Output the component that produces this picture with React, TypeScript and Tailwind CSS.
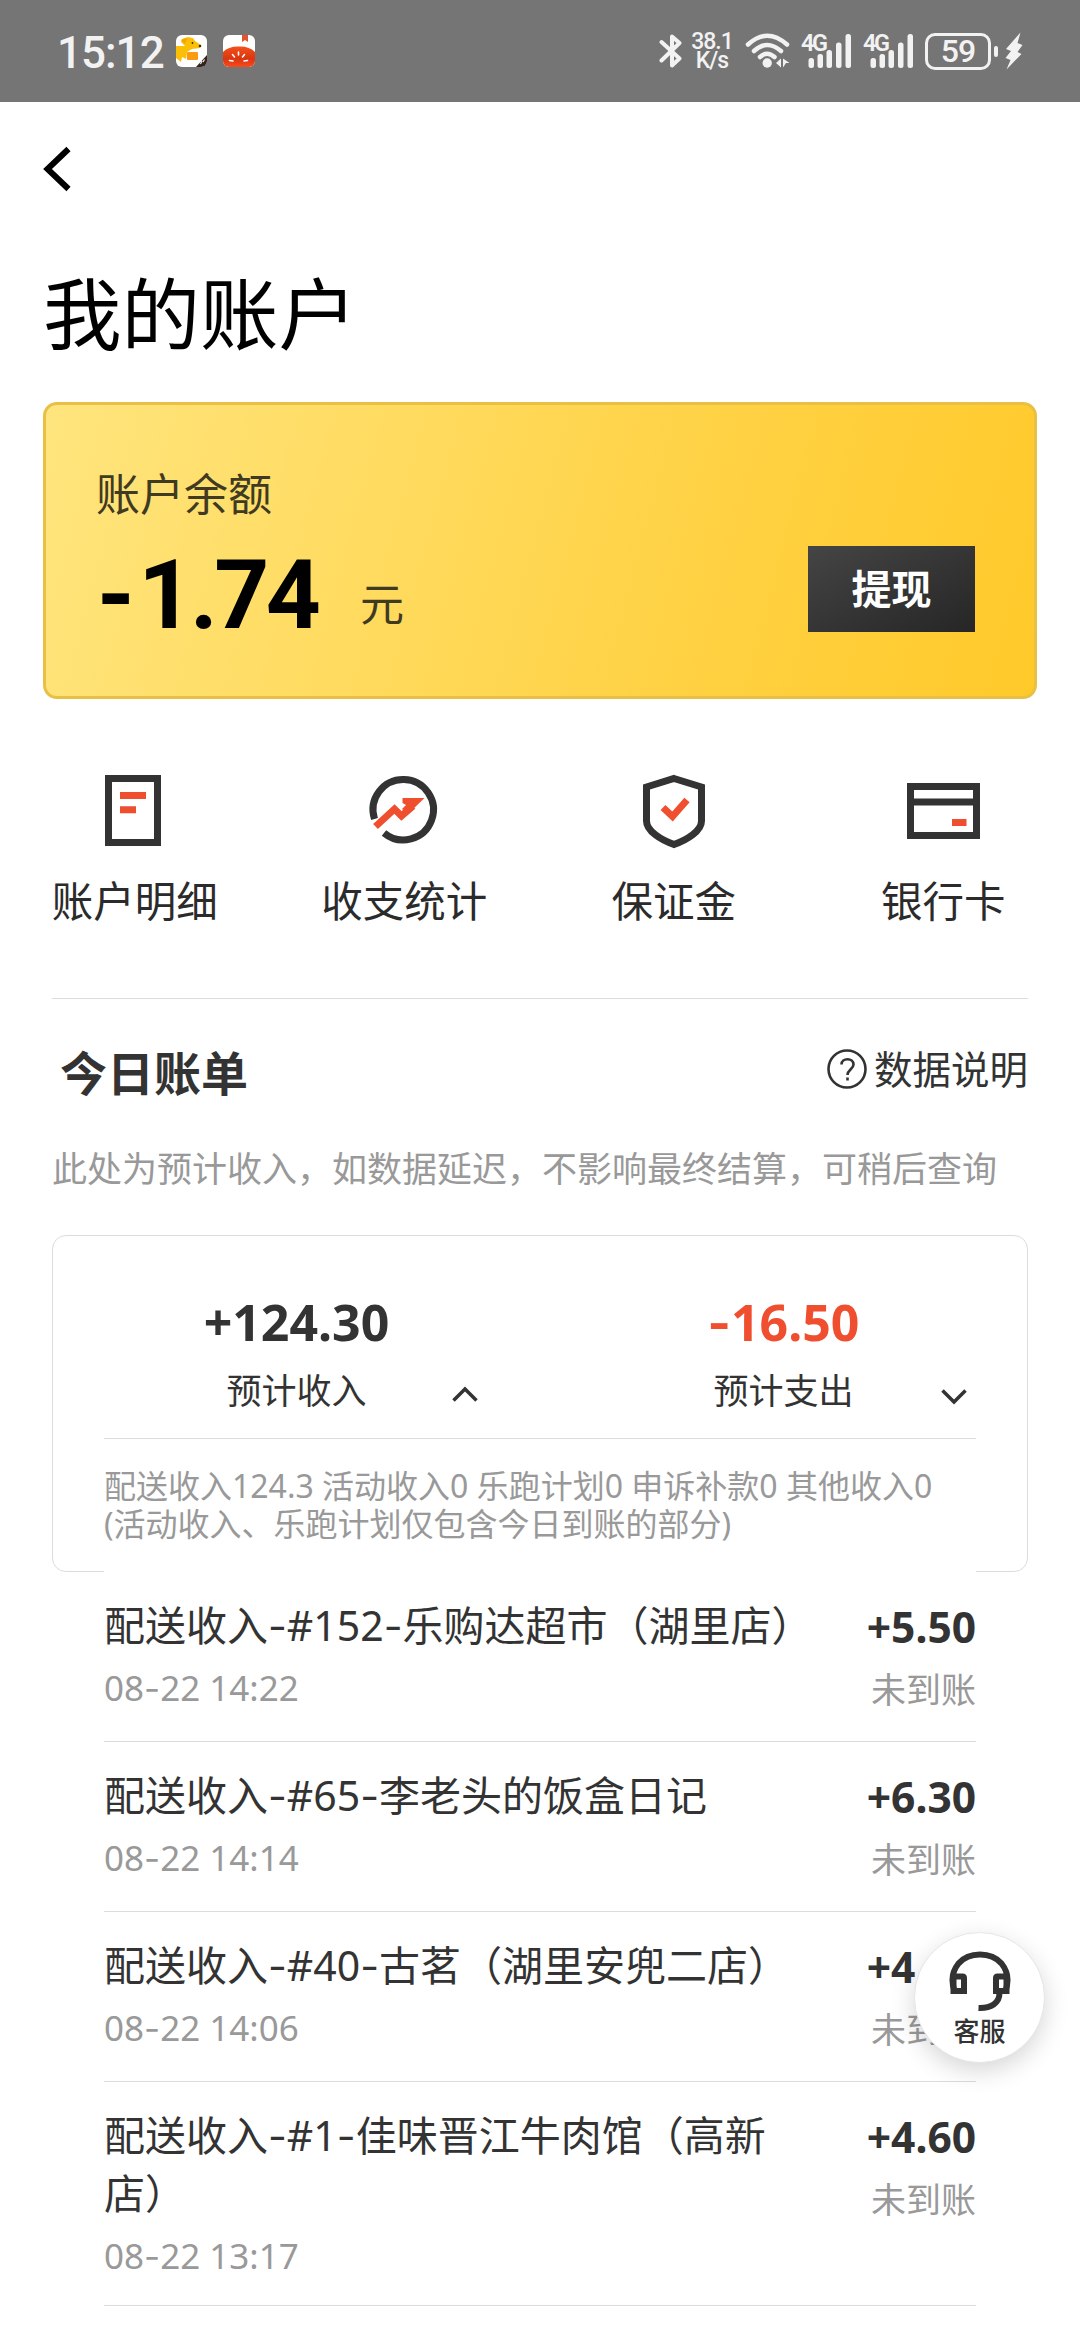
import { Fragment, type ReactNode } from 'react'

type Bill = {
    id: number
    title: string
    time: string
    amount: string
}

const bills: Bill[] = [
    { id: 152, title: '配送收入-#152-乐购达超市（湖里店）', time: '08-22 14:22', amount: '+5.50' },
    { id: 65, title: '配送收入-#65-李老头的饭盒日记', time: '08-22 14:14', amount: '+6.30' },
    { id: 40, title: '配送收入-#40-古茗（湖里安兜二店）', time: '08-22 14:06', amount: '+4.60' },
    { id: 1, title: '配送收入-#1-佳味晋江牛肉馆（高新店）', time: '08-22 13:17', amount: '+4.60' },
]

// Inter has a wider hyphen than Noto Sans
function Dashed({ text }: { text: string }) {
    return (
        <>
            {text.split('-').map((part, i) => (
                <Fragment key={i}>
                    {i > 0 && <span className="leading-none [font-family:Inter,sans-serif]">-</span>}
                    {part}
                </Fragment>
            ))}
        </>
    )
}

function KangarooAppIcon() {
    return (
        <svg className="w-8 h-8" viewBox="0 0 32 32">
            <defs>
                <clipPath id="kangaroo">
                    <rect width="31" height="32" rx="6" />
                </clipPath>
            </defs>
            <g clipPath="url(#kangaroo)">
                <rect width="32" height="32" fill="#fff" />
                <path d="M0 11 L9 11 L5 7 L6 4 L12 2 L17 3 L19 6 L25 10 L24 13 L16 14 L11 17 L10 24 L6 22 L5 27 L0 23 Z" fill="#fcbf08" />
                <path d="M5 5 L11 3 L9 9 Z" fill="#f5a300" />
                <rect x="11" y="17" width="11" height="8" rx="1" fill="#fb9a10" />
                <circle cx="16.5" cy="8" r="0.9" fill="#3a2a10" />
                <circle cx="24" cy="11" r="1.3" fill="#3a2a10" />
                <path d="M20 32 L31 20 V32 Z" fill="#35241b" />
                <path d="M24.5 29 L26 26 M27 27 L28.5 24.5" stroke="#fff" strokeWidth="1.1" />
            </g>
        </svg>
    )
}

function TomatoAppIcon() {
    return (
        <svg className="w-8 h-8" viewBox="0 0 32 32">
            <defs>
                <clipPath id="tomato">
                    <rect width="32" height="32" rx="6" />
                </clipPath>
                <linearGradient id="tomatoBody" x1="0" y1="0" x2="0" y2="1">
                    <stop offset="0" stopColor="#f4511e" />
                    <stop offset="0.6" stopColor="#d93610" />
                    <stop offset="1" stopColor="#fb4a1a" />
                </linearGradient>
            </defs>
            <g clipPath="url(#tomato)">
                <rect width="32" height="32" fill="#fff" />
                <path d="M19 0 H25 V7 L22 5 L19 7 Z" fill="#e0552f" />
                <path d="M0 17 Q6 11 16 11.5 Q26 11 32 17 V32 H0 Z" fill="url(#tomatoBody)" />
                <path d="M15.5 17 V20 M9.5 19.5 L11.5 22 M21.5 19.5 L19.5 22 M6.5 25.5 L10 26 M24.5 25.5 L21 26" stroke="#fff" strokeWidth="1.6" strokeLinecap="round" />
            </g>
        </svg>
    )
}

function Signal() {
    return (
        <div className="flex w-[52px] h-[35px] relative">
            <span className="absolute left-0 top-0 text-[23.5px] leading-[18px] font-semibold tracking-[-2.5px] [font-family:Roboto,sans-serif]">4G</span>
            <svg className="w-[52px] h-[35px]" viewBox="0 0 52 35" fill="#f2f2f2">
                <rect x="7.5" y="24" width="5.5" height="10" rx="2.5" />
                <rect x="16.5" y="20" width="5.5" height="14" rx="2.5" />
                <rect x="25.5" y="16" width="5.5" height="18" rx="2.5" />
                <rect x="35" y="8.5" width="5.5" height="25.5" rx="2.5" />
                <rect x="44.5" y="0" width="5.5" height="34" rx="2.5" />
            </svg>
        </div>
    )
}

function StatusBar() {
    return (
        <div className="flex items-center justify-between h-[102px] pl-[57px] pr-[57px] bg-[#757575] text-[#f2f2f2]">
            <div className="flex items-center">
                <span className="w-[119px] pt-[3px] text-[44px] leading-[50px] font-medium tracking-[-1px] [font-family:Roboto,sans-serif]">15:12</span>
                <KangarooAppIcon />
                <div className="w-[15px]" />
                <TomatoAppIcon />
            </div>
            <div className="flex items-center">
                <svg className="w-[24px] h-[36px]" viewBox="0 0 24 36" fill="none" stroke="#f2f2f2" strokeWidth="4" strokeLinejoin="round" strokeLinecap="round">
                    <path d="M2.5 9 L20.5 25.5 L13 32.5 V3.5 L20.5 10 L2.5 27.5" />
                </svg>
                <div className="flex flex-col items-center w-[42px] pt-px ml-[8px] text-[23px] leading-[18.5px] tracking-[-1px] font-medium [font-family:Roboto,sans-serif]">
                    <span>38.1</span>
                    <span>K/s</span>
                </div>
                <svg className="w-[46px] h-[36px] ml-[12px]" viewBox="0 0 46 36" fill="none" stroke="#f2f2f2" strokeWidth="4.5" strokeLinecap="round">
                    <path d="M3 11.5 Q22 -6 42 11.5" />
                    <path d="M9 18 Q22 6 36 18" />
                    <path d="M15 24 Q22 17.5 29.5 24" />
                    <circle cx="22.2" cy="30" r="4.7" fill="#f2f2f2" stroke="none" />
                    <path d="M31 30 L36 25.5 V34.5 Z M38 25.5 L44.5 30 H41 L38 34.5 Z" fill="#f2f2f2" stroke="none" />
                </svg>
                <div className="flex gap-[10px] ml-[10px]">
                    <Signal />
                    <Signal />
                </div>
                <div className="flex items-center justify-center w-[66px] h-[37px] ml-[10px] rounded-[10px] border-[3px] border-[#f2f2f2] text-[32px] leading-[32px] font-medium tracking-[-1px] [font-family:Roboto,sans-serif]">
                    59
                </div>
                <div className="w-[4px] h-[11px] ml-[3px] rounded-[2px] bg-[#f2f2f2]" />
                <svg className="w-[18px] h-[38px] ml-[7px]" viewBox="0 0 18 38" fill="#f2f2f2">
                    <path d="M15.5 0.5 L1 17 L6 19 L0.5 26 L5.5 28 L1.5 37.5 L16.5 22 L12.5 20 L17.5 13 L12.5 11 Z" />
                </svg>
            </div>
        </div>
    )
}

function BalanceCard() {
    return (
        <div className="flex justify-between h-[297px] mx-[43px] rounded-[14px] border-[3px] border-[#e9c045] bg-[linear-gradient(105deg,#ffe57e_0%,#ffd348_60%,#ffc929_100%)] bg-origin-border">
            <div className="pt-[59px] pl-[50px]">
                <p className="text-[44px] leading-[60px] text-[#3f3a22]">账户余额</p>
                <div className="flex items-end mt-[21px]">
                    <span className="w-[264px] pl-px text-[96px] leading-[100px] font-bold text-black tracking-[-3.5px] [font-family:Roboto,sans-serif]">
                        <span className="mr-[7px]">-</span>1.74
                    </span>
                    <span className="mb-[11px] text-[44px] leading-[60px] text-[#3f3a22]">元</span>
                </div>
            </div>
            <button className="w-[167px] h-[86px] mt-[141px] mr-[59px] bg-gradient-to-br from-[#454545] to-[#262626] text-white text-[40px] font-bold">
                提现
            </button>
        </div>
    )
}

function Shortcut({ label, children }: { label: string; children: ReactNode }) {
    return (
        <div className="flex flex-col items-center">
            <svg className="w-20 h-20" viewBox="0 0 80 80" fill="none" stroke="#333333" strokeWidth="7">
                {children}
            </svg>
            <span className="mt-[20px] text-[41.5px] leading-[60px] text-[#2b2b2b]">{label}</span>
        </div>
    )
}

function Shortcuts() {
    return (
        <div className="grid grid-cols-4 w-[1078px] mt-[72px]">
            <Shortcut label="账户明细">
                <rect x="13.5" y="7.5" width="49" height="64" />
                <path d="M25 24.5 H51 M25 38.7 H41" stroke="#f04f2f" />
            </Shortcut>
            <Shortcut label="收支统计">
                <path d="M10.5 48 A30.2 30.2 0 1 1 20 62" />
                <path d="M11.5 55.5 L30.5 38 L37.5 45 L49 35" stroke="#f04f2f" />
                <path d="M38.5 27 H60.5 L44 43 L38 38 L42 34 L38.5 32 Z" fill="#f04f2f" stroke="none" />
            </Shortcut>
            <Shortcut label="保证金">
                <path d="M40 7.5 L67.5 16 V50 C67.5 60 53 69 40 73.5 C27 69 12.5 60 12.5 50 V16 Z" />
                <path d="M29 36.5 L38.5 45.5 L53 29" stroke="#f04f2f" />
            </Shortcut>
            <Shortcut label="银行卡">
                <rect x="7.5" y="15.5" width="66" height="49" />
                <path d="M7 31 H74" />
                <path d="M49 51.5 H63.5" stroke="#f04f2f" />
            </Shortcut>
        </div>
    )
}

function SummaryColumn({ amount, label, open }: { amount: string; label: string; open?: boolean }) {
    return (
        <div>
            <p className={open ? 'text-center text-[50px] leading-[60px] font-bold text-[#333333]' : 'text-center text-[50px] leading-[60px] font-bold text-[#f04f2f]'}>
                <Dashed text={amount} />
            </p>
            <div className="grid grid-cols-[1fr_auto_1fr] items-center mt-[14px] text-[35px] leading-[50px] text-[#333333]">
                <span />
                <span>{label}</span>
                <svg className={open ? 'w-[26px] h-[16px] ml-[85px] mt-[6px]' : 'w-[26px] h-[16px] ml-[87px] mt-[12px]'} viewBox="0 0 26 16" fill="none" stroke="#333333" strokeWidth="3.5">
                    <path d={open ? 'M1.5 14.5 L13 3 L24.5 14.5' : 'M1.5 1.5 L13 13 L24.5 1.5'} />
                </svg>
            </div>
        </div>
    )
}

function BillRow({ bill }: { bill: Bill }) {
    return (
        <div className="flex justify-between pt-[24px] pb-[33px] last:pb-[29px] border-b border-[#dcdcdc]">
            <div className="w-[716px]">
                <p className="text-[41px] leading-[58px] text-[#333333]">
                    <Dashed text={bill.title} />
                </p>
                <p className="mt-[14px] text-[35px] leading-[40px] text-[#999999]">
                    <Dashed text={bill.time} />
                </p>
            </div>
            <div className="-mb-[2px] text-right whitespace-nowrap">
                <p className="mt-[2px] text-[42.5px] leading-[58px] font-bold text-[#333333]">{bill.amount}</p>
                <p className="mt-[14px] text-[35px] leading-[40px] text-[#999999]">未到账</p>
            </div>
        </div>
    )
}

function ServiceButton() {
    return (
        <button className="absolute left-[914px] top-[1932px] flex flex-col items-center w-[131px] h-[131px] pt-[18px] rounded-full border border-[#e6e6e6] bg-white shadow-[0_8px_24px_rgba(0,0,0,0.16)]">
            <svg className="w-[62px] h-[62px]" viewBox="0 0 62 62" fill="none" stroke="#333333" strokeWidth="6">
                <path d="M5.5 40 C2 30 3.5 20 9.5 12.5 C20 0.5 42 0.5 52.5 12.5 C58.5 20 60 30 56.5 40" />
                <path d="M4.5 40 V25.5 H13.5 Q15 25.5 15 27 V40 Z" />
                <path d="M57.5 40 V25.5 H48.5 Q47 25.5 47 27 V40 Z" />
                <path d="M50.5 42 C50.5 52 42 57.5 29.5 57" />
            </svg>
            <span className="mt-[3px] text-[26px] leading-[30px] font-medium text-[#333333]">客服</span>
        </button>
    )
}

export default function App() {
    return (
        <div className="relative w-[1080px] h-[2340px] overflow-hidden bg-white text-[#333333] [font-family:'Noto_Sans','Noto_Sans_CJK_SC',sans-serif]">
            <StatusBar />

            <div className="flex items-center h-[134px] pl-[42px]">
                <svg className="w-[30px] h-[48px]" viewBox="0 0 30 48" fill="none" stroke="#000000" strokeWidth="6">
                    <path d="M26.5 4 L5.5 24 L26.5 44" />
                </svg>
            </div>
            <h1 className="mt-[34px] mb-[44px] pl-[43px] text-[78.5px] leading-[88px] text-black">我的账户</h1>

            <BalanceCard />
            <Shortcuts />

            {/* 今日账单 */}
            <div className="mx-[52px] mt-[67px] border-t border-[#dcdcdc]">
                <div className="flex items-start justify-between pt-[44px]">
                    <h2 className="pl-[8px] text-[47px] leading-[60px] font-bold">今日账单</h2>
                    <div className="flex items-center -mt-[4px] text-[38.5px] leading-[60px]">
                        <svg className="w-[40px] h-[40px] mr-[7px]" viewBox="0 0 40 40" fill="none" stroke="#333333" strokeWidth="2.6">
                            <circle cx="20" cy="20" r="18.5" />
                            <path d="M14.5 15.5 C14.5 8.5 26.5 8.5 26.5 15.5 C26.5 20 20.5 20.5 20.5 26" />
                            <path d="M20.5 28.5 V31.5" />
                        </svg>
                        <span>数据说明</span>
                    </div>
                </div>
                <p className="mt-[41px] text-[35px] leading-[50px] text-[#999999] whitespace-nowrap">
                    此处为预计收入，如数据延迟，不影响最终结算，可稍后查询
                </p>
            </div>

            <div className="h-[337px] mx-[52px] mt-[41px] pt-[56px] rounded-[14px] border border-[#dcdcdc]">
                <div className="grid grid-cols-2">
                    <SummaryColumn amount="+124.30" label="预计收入" open />
                    <SummaryColumn amount="-16.50" label="预计支出" />
                </div>
                <div className="mx-[51px] mt-[22px] pt-[28px] border-t border-[#dcdcdc] text-[32px] leading-[38px] text-[#999999] whitespace-nowrap">
                    <p>配送收入124.3 活动收入0 乐跑计划0 申诉补款0 其他收入0</p>
                    <p>(活动收入、乐跑计划仅包含今日到账的部分)</p>
                </div>
            </div>

            <div className="relative -mt-px mx-[104px] pt-px bg-white">
                {bills.map(bill => (
                    <BillRow key={bill.id} bill={bill} />
                ))}
            </div>

            <ServiceButton />
        </div>
    )
}
